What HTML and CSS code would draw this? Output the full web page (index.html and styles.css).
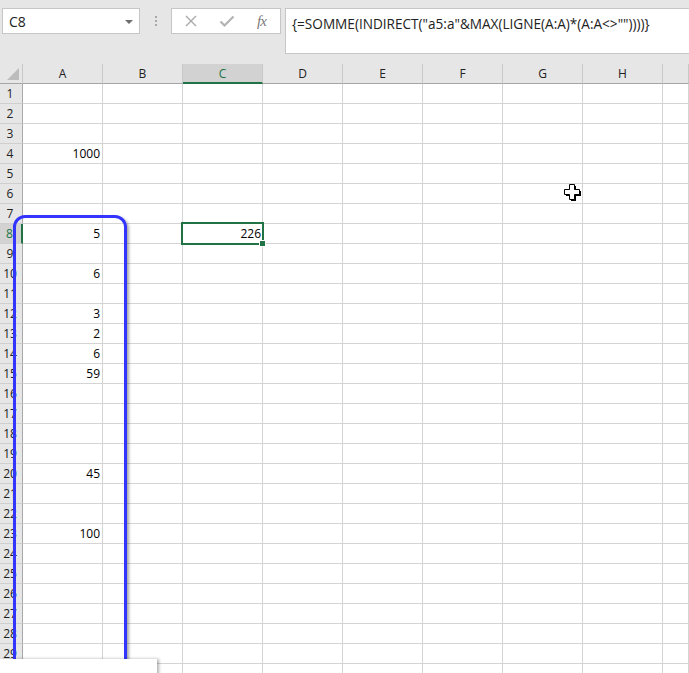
FILE: index.html
```html
<!DOCTYPE html>
<html>
<head>
<meta charset="utf-8">
<link rel="stylesheet" href="styles.css">
</head>
<body>
<div class="app">
  <div class="toolbar">
    <div class="namebox"><span class="name">C8</span><span class="drop"></span></div>
    <div class="grip"><i></i><i></i><i></i></div>
    <div class="btns">
      <svg class="ico" width="14" height="14" viewBox="0 0 14 14"><path d="M2 2 L12 12 M12 2 L2 12" stroke="#a9a9a9" stroke-width="1.4" fill="none"/></svg>
      <svg class="ico" width="16" height="14" viewBox="0 0 16 14"><path d="M1.5 7.5 L5.5 11.5 L14.5 2.5" stroke="#b3b3b3" stroke-width="2.2" fill="none"/></svg>
      <span class="fx">fx</span>
    </div>
    <div class="formula">{=SOMME(INDIRECT("a5:a"&amp;MAX(LIGNE(A:A)*(A:A&lt;&gt;""))))}</div>
  </div>
  <div class="sheet">
    <div class="row head"><div class="rh corner"><span class="tri"></span></div><div class="c">A</div><div class="c">B</div><div class="c act">C</div><div class="c">D</div><div class="c">E</div><div class="c">F</div><div class="c">G</div><div class="c">H</div><div class="c last"></div></div>
    <div class="row"><div class="rh">1</div><div class="c"></div><div class="c"></div><div class="c"></div><div class="c"></div><div class="c"></div><div class="c"></div><div class="c"></div><div class="c"></div><div class="c last"></div></div>
    <div class="row"><div class="rh">2</div><div class="c"></div><div class="c"></div><div class="c"></div><div class="c"></div><div class="c"></div><div class="c"></div><div class="c"></div><div class="c"></div><div class="c last"></div></div>
    <div class="row"><div class="rh">3</div><div class="c"></div><div class="c"></div><div class="c"></div><div class="c"></div><div class="c"></div><div class="c"></div><div class="c"></div><div class="c"></div><div class="c last"></div></div>
    <div class="row"><div class="rh">4</div><div class="c">1000</div><div class="c"></div><div class="c"></div><div class="c"></div><div class="c"></div><div class="c"></div><div class="c"></div><div class="c"></div><div class="c last"></div></div>
    <div class="row"><div class="rh">5</div><div class="c"></div><div class="c"></div><div class="c"></div><div class="c"></div><div class="c"></div><div class="c"></div><div class="c"></div><div class="c"></div><div class="c last"></div></div>
    <div class="row"><div class="rh">6</div><div class="c"></div><div class="c"></div><div class="c"></div><div class="c"></div><div class="c"></div><div class="c"></div><div class="c"></div><div class="c"></div><div class="c last"></div></div>
    <div class="row"><div class="rh">7</div><div class="c"></div><div class="c"></div><div class="c"></div><div class="c"></div><div class="c"></div><div class="c"></div><div class="c"></div><div class="c"></div><div class="c last"></div></div>
    <div class="row"><div class="rh act">8</div><div class="c">5</div><div class="c"></div><div class="c selcell">226<span class="sel"><span class="handle"></span></span></div><div class="c"></div><div class="c"></div><div class="c"></div><div class="c"></div><div class="c"></div><div class="c last"></div></div>
    <div class="row"><div class="rh">9</div><div class="c"></div><div class="c"></div><div class="c"></div><div class="c"></div><div class="c"></div><div class="c"></div><div class="c"></div><div class="c"></div><div class="c last"></div></div>
    <div class="row"><div class="rh">10</div><div class="c">6</div><div class="c"></div><div class="c"></div><div class="c"></div><div class="c"></div><div class="c"></div><div class="c"></div><div class="c"></div><div class="c last"></div></div>
    <div class="row"><div class="rh">11</div><div class="c"></div><div class="c"></div><div class="c"></div><div class="c"></div><div class="c"></div><div class="c"></div><div class="c"></div><div class="c"></div><div class="c last"></div></div>
    <div class="row"><div class="rh">12</div><div class="c">3</div><div class="c"></div><div class="c"></div><div class="c"></div><div class="c"></div><div class="c"></div><div class="c"></div><div class="c"></div><div class="c last"></div></div>
    <div class="row"><div class="rh">13</div><div class="c">2</div><div class="c"></div><div class="c"></div><div class="c"></div><div class="c"></div><div class="c"></div><div class="c"></div><div class="c"></div><div class="c last"></div></div>
    <div class="row"><div class="rh">14</div><div class="c">6</div><div class="c"></div><div class="c"></div><div class="c"></div><div class="c"></div><div class="c"></div><div class="c"></div><div class="c"></div><div class="c last"></div></div>
    <div class="row"><div class="rh">15</div><div class="c">59</div><div class="c"></div><div class="c"></div><div class="c"></div><div class="c"></div><div class="c"></div><div class="c"></div><div class="c"></div><div class="c last"></div></div>
    <div class="row"><div class="rh">16</div><div class="c"></div><div class="c"></div><div class="c"></div><div class="c"></div><div class="c"></div><div class="c"></div><div class="c"></div><div class="c"></div><div class="c last"></div></div>
    <div class="row"><div class="rh">17</div><div class="c"></div><div class="c"></div><div class="c"></div><div class="c"></div><div class="c"></div><div class="c"></div><div class="c"></div><div class="c"></div><div class="c last"></div></div>
    <div class="row"><div class="rh">18</div><div class="c"></div><div class="c"></div><div class="c"></div><div class="c"></div><div class="c"></div><div class="c"></div><div class="c"></div><div class="c"></div><div class="c last"></div></div>
    <div class="row"><div class="rh">19</div><div class="c"></div><div class="c"></div><div class="c"></div><div class="c"></div><div class="c"></div><div class="c"></div><div class="c"></div><div class="c"></div><div class="c last"></div></div>
    <div class="row"><div class="rh">20</div><div class="c">45</div><div class="c"></div><div class="c"></div><div class="c"></div><div class="c"></div><div class="c"></div><div class="c"></div><div class="c"></div><div class="c last"></div></div>
    <div class="row"><div class="rh">21</div><div class="c"></div><div class="c"></div><div class="c"></div><div class="c"></div><div class="c"></div><div class="c"></div><div class="c"></div><div class="c"></div><div class="c last"></div></div>
    <div class="row"><div class="rh">22</div><div class="c"></div><div class="c"></div><div class="c"></div><div class="c"></div><div class="c"></div><div class="c"></div><div class="c"></div><div class="c"></div><div class="c last"></div></div>
    <div class="row"><div class="rh">23</div><div class="c">100</div><div class="c"></div><div class="c"></div><div class="c"></div><div class="c"></div><div class="c"></div><div class="c"></div><div class="c"></div><div class="c last"></div></div>
    <div class="row"><div class="rh">24</div><div class="c"></div><div class="c"></div><div class="c"></div><div class="c"></div><div class="c"></div><div class="c"></div><div class="c"></div><div class="c"></div><div class="c last"></div></div>
    <div class="row"><div class="rh">25</div><div class="c"></div><div class="c"></div><div class="c"></div><div class="c"></div><div class="c"></div><div class="c"></div><div class="c"></div><div class="c"></div><div class="c last"></div></div>
    <div class="row"><div class="rh">26</div><div class="c"></div><div class="c"></div><div class="c"></div><div class="c"></div><div class="c"></div><div class="c"></div><div class="c"></div><div class="c"></div><div class="c last"></div></div>
    <div class="row"><div class="rh">27</div><div class="c"></div><div class="c"></div><div class="c"></div><div class="c"></div><div class="c"></div><div class="c"></div><div class="c"></div><div class="c"></div><div class="c last"></div></div>
    <div class="row"><div class="rh">28</div><div class="c"></div><div class="c"></div><div class="c"></div><div class="c"></div><div class="c"></div><div class="c"></div><div class="c"></div><div class="c"></div><div class="c last"></div></div>
    <div class="row"><div class="rh">29</div><div class="c"></div><div class="c"></div><div class="c"></div><div class="c"></div><div class="c"></div><div class="c"></div><div class="c"></div><div class="c"></div><div class="c last"></div></div>
    <div class="row"><div class="rh"></div><div class="c"></div><div class="c"></div><div class="c"></div><div class="c"></div><div class="c"></div><div class="c"></div><div class="c"></div><div class="c"></div><div class="c last"></div></div>

    <div class="callout"></div>
    <div class="tab"></div>
    <svg class="cursor" width="17" height="17" viewBox="0 0 17 17">
      <polygon points="6,1 11,1 11,6 16,6 16,11 11,11 11,16 6,16 6,11 1,11 1,6 6,6" fill="#000" transform="translate(1,1)"/>
      <polygon points="5.5,0.5 10.5,0.5 10.5,5.5 15.5,5.5 15.5,10.5 10.5,10.5 10.5,15.5 5.5,15.5 5.5,10.5 0.5,10.5 0.5,5.5 5.5,5.5" fill="#fff" stroke="#000" stroke-width="1"/>
    </svg>
  </div>
</div>
</body>
</html>
```
FILE: styles.css
```css
html, body {
  margin: 0;
  padding: 0;
  background: #fff;
}
.app {
  width: 689px;
  height: 673px;
  overflow: hidden;
  position: relative;
  font-family: "Open Sans", "Liberation Sans", sans-serif;
}
.toolbar {
  height: 64px;
  background: #e6e6e6;
  display: flex;
  align-items: flex-start;
  padding: 8px 0 0 2px;
  box-sizing: border-box;
}
.namebox {
  width: 138px;
  height: 26px;
  box-sizing: border-box;
  background: #fff;
  border: 1px solid #c6c6c6;
  display: flex;
  align-items: center;
  justify-content: space-between;
  padding: 0 6px 0 6px;
}
.name {
  font-size: 14px;
  color: #222;
}
.drop {
  width: 0;
  height: 0;
  border-left: 4px solid transparent;
  border-right: 4px solid transparent;
  border-top: 4px solid #6e6e6e;
  margin-top: 1px;
}
.grip {
  width: 31px;
  height: 26px;
  display: flex;
  flex-direction: column;
  align-items: center;
  justify-content: center;
  gap: 2px;
}
.grip i {
  display: block;
  width: 2px;
  height: 2px;
  background: #a8a8a8;
}
.btns {
  width: 110px;
  height: 26px;
  box-sizing: border-box;
  background: #fff;
  border: 1px solid #c6c6c6;
  display: flex;
  align-items: center;
  padding: 0 0 0 12px;
  gap: 22px;
}
.ico { display: block; }
.btns .ico:nth-child(2) { margin-left: -1px; }
.fx {
  font-family: "Liberation Serif", serif;
  font-style: italic;
  font-size: 15px;
  color: #7a7a7a;
  letter-spacing: -1px;
}
.formula {
  margin-left: 4px;
  flex: 1;
  height: 46px;
  box-sizing: border-box;
  background: #fff;
  border: 1px solid #c6c6c6;
  border-right: none;
  padding: 5px 0 0 6px;
  font-size: 13.6px;
  color: #222;
  white-space: nowrap;
}
.sheet {
  position: relative;
}
.row {
  display: flex;
  height: 20px;
}
.rh {
  width: 23px;
  flex: none;
  box-sizing: border-box;
  background: #e6e6e6;
  border-right: 1px solid #a9a9a9;
  border-bottom: 1px solid #cfcfcf;
  font-size: 12px;
  line-height: 19px;
  text-align: center;
  padding-right: 2px;
  color: #222;
}
.rh.act {
  background: #d2d2d2;
  color: #217346;
  border-right: 2px solid #217346;
}
.c {
  width: 80px;
  flex: none;
  box-sizing: border-box;
  border-right: 1px solid #d4d4d4;
  border-bottom: 1px solid #d4d4d4;
  font-size: 12px;
  line-height: 19px;
  text-align: right;
  padding-right: 2px;
  color: #000;
}
.c.last {
  flex: 1;
}
.head .c {
  background: #e6e6e6;
  border-right: 1px solid #c8c8c8;
  border-bottom: 1px solid #a6a6a6;
  text-align: center;
  padding: 0;
  color: #222;
}
.head .c.act {
  background: #d2d2d2;
  color: #217346;
  border-bottom: 2px solid #217346;
}
.head .rh {
  border-bottom: 1px solid #a6a6a6;
  border-right: 1px solid #c8c8c8;
  position: relative;
}
.tri {
  position: absolute;
  right: 3px;
  bottom: 3px;
  width: 0;
  height: 0;
  border-left: 12px solid transparent;
  border-bottom: 12px solid #bcbcbc;
}
.selcell {
  position: relative;
  padding-right: 1px;
}
.sel {
  position: absolute;
  left: -2px;
  top: -2px;
  right: -2px;
  bottom: -2px;
  border: 2px solid #217346;
}
.handle {
  position: absolute;
  right: -4px;
  bottom: -4px;
  width: 5px;
  height: 5px;
  background: #217346;
  border: 1px solid #fff;
}
.callout {
  position: absolute;
  left: 13px;
  top: 151px;
  width: 114px;
  height: 600px;
  box-sizing: border-box;
  border: 3px solid #3434ff;
  border-radius: 12px;
  box-shadow: 2px 2px 3px rgba(0, 0, 0, 0.35);
}
.tab {
  position: absolute;
  left: 0;
  top: 595px;
  width: 157px;
  height: 30px;
  background: #fff;
  box-shadow: 2px 0 3px rgba(0, 0, 0, 0.3);
}
.cursor {
  position: absolute;
  left: 564px;
  top: 120px;
}
```
